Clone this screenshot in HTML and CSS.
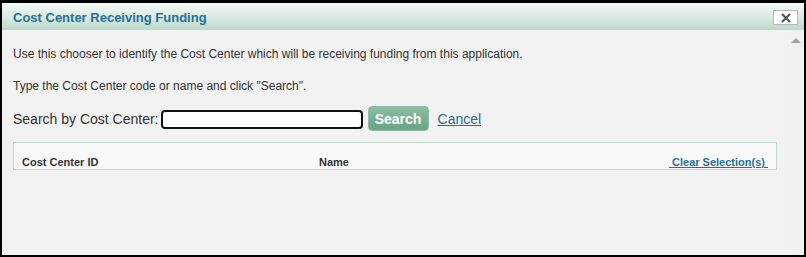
FILE: index.html
```html
<!DOCTYPE html>
<html>
<head>
<meta charset="utf-8">
<link rel="stylesheet" href="styles.css">
</head>
<body>
<div class="dialog">
  <div class="titlebar">
    <span class="title">Cost Center Receiving Funding</span>
    <button class="close" aria-label="close">
      <svg width="12" height="10" viewBox="0 0 12 10"><path d="M2 1 L10 9 M10 1 L2 9" stroke="#555" stroke-width="2.2" fill="none"/></svg>
    </button>
  </div>
  <div class="content">
    <div class="main">
      <p class="intro">Use this chooser to identify the Cost Center which will be receiving funding from this application.</p>
      <p class="intro second">Type the Cost Center code or name and click "Search".</p>
      <div class="search-row">
        <label class="search-label">Search by Cost Center:</label>
        <input class="search-input" type="text">
        <button class="search-btn">Search</button>
        <a class="cancel" href="#">Cancel</a>
      </div>
      <div class="results">
        <span class="col-id">Cost Center ID</span>
        <span class="col-name">Name</span>
        <a class="clear" href="#">&nbsp;Clear Selection(s)&nbsp;</a>
      </div>
    </div>
    <div class="scrollbar">
      <svg width="10" height="6" viewBox="0 0 10 6"><path d="M0 6 L5 1 L10 6 Z" fill="#a3a3a3"/></svg>
    </div>
  </div>
</div>
</body>
</html>
```

FILE: styles.css
```css
html, body {
  margin: 0;
  padding: 0;
  background: #000;
}
.dialog {
  box-sizing: border-box;
  width: 806px;
  height: 257px;
  border: 2px solid #000;
  border-top-width: 3px;
  background: #f2f2f2;
  display: flex;
  flex-direction: column;
  font-family: "Liberation Sans", Arial, sans-serif;
  overflow: hidden;
}
.titlebar {
  height: 27px;
  flex: none;
  background: linear-gradient(to bottom, #f3f9f5 0%, #dcece3 50%, #bad8c9 100%);
  display: flex;
  align-items: center;
  justify-content: space-between;
  padding: 0 6px 0 11px;
}
.title {
  color: #26709a;
  font-weight: bold;
  font-size: 13px;
  margin-top: 1px;
}
.close {
  width: 25px;
  height: 15px;
  padding: 0;
  border: 1px solid #b9b9b9;
  background: #fff;
  display: flex;
  align-items: center;
  justify-content: center;
  margin-top: 2px;
}
.content {
  flex: 1;
  display: flex;
}
.main {
  flex: 1;
  padding: 16px 11px 0 11px;
}
.scrollbar {
  width: 16px;
  background: #f1f1f1;
  display: flex;
  justify-content: center;
  padding-top: 7px;
  box-sizing: border-box;
}
.scrollbar svg {
  display: block;
}
.intro {
  margin: 0;
  font-size: 12px;
  line-height: 16px;
  color: #333;
}
.intro.second {
  margin-top: 16px;
}
.search-row {
  margin-top: 12px;
  display: flex;
  align-items: center;
  height: 25px;
}
.search-label {
  font-size: 14px;
  color: #333;
}
.search-input {
  box-sizing: border-box;
  width: 202px;
  height: 19px;
  margin: 1px 0 0 2px;
  border: 2px solid #111;
  border-radius: 4px;
  background: #fff;
  padding: 0;
}
.search-btn {
  box-sizing: border-box;
  height: 25px;
  width: 61px;
  margin-left: 5px;
  border: 1px solid #8fbca3;
  border-radius: 4px;
  background: linear-gradient(to bottom, #8bbca1 0%, #6aa385 100%);
  color: #fff;
  font-family: "Liberation Sans", Arial, sans-serif;
  font-weight: bold;
  font-size: 14px;
  padding: 0;
}
.cancel {
  margin-left: 9px;
  color: #26709a;
  font-size: 14px;
  text-decoration: underline;
}
.results {
  box-sizing: border-box;
  margin-top: 11px;
  height: 28px;
  border: 1px solid #bcd8cc;
  background: #f9f9f9;
  display: flex;
  align-items: flex-end;
  padding: 0 8px 1px 8px;
  font-size: 11px;
  font-weight: bold;
}
.col-id {
  width: 297px;
  color: #333;
}
.col-name {
  flex: 1;
  color: #333;
}
.clear {
  color: #26709a;
  text-decoration: underline;
}
```
